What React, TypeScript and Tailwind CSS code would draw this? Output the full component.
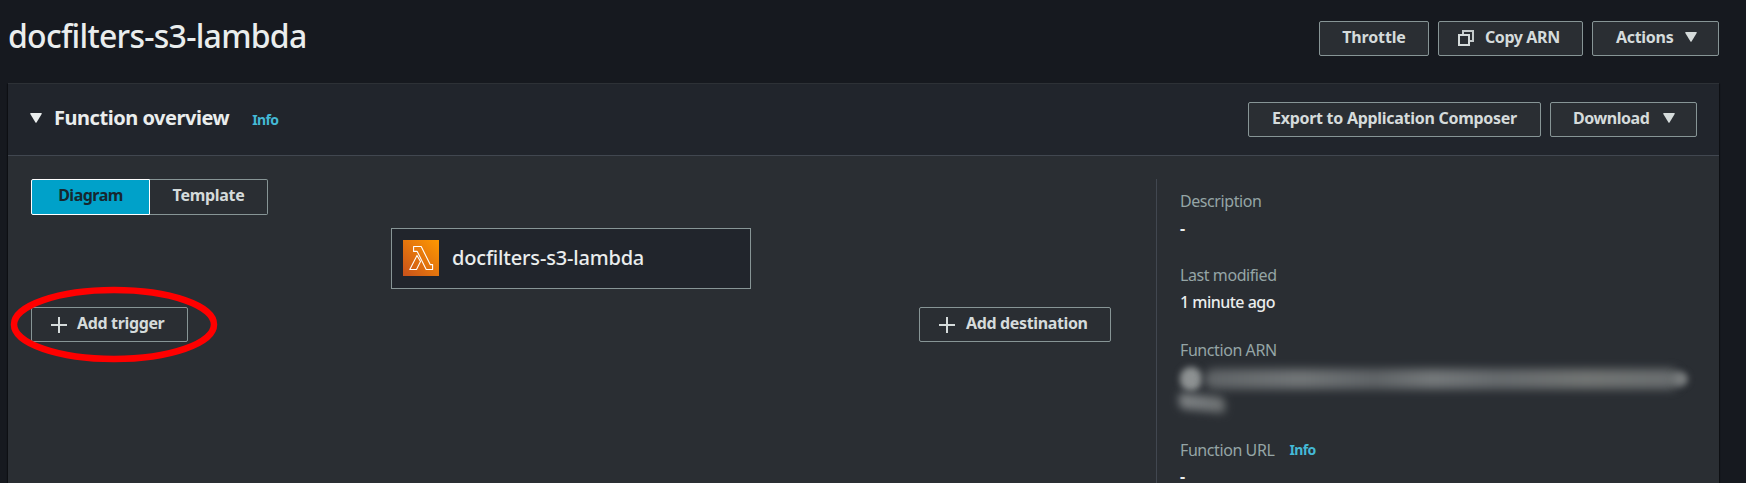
import React from "react";

const buttonBase =
  "flex h-[35px] shrink-0 items-center rounded-[2px] border border-[#879596] bg-[#2a2e33] pb-[3px] text-[16px] leading-none font-bold whitespace-nowrap text-[#d5dbdb]";

function Caret({ className }: { className: string }) {
  return (
    <svg className={className} width="12" height="10" viewBox="0 0 12 10" fill="currentColor">
      <path d="M0.8 0h10.4q1 0 .5 1L6.7 9.2q-.7 1-1.4 0L.3 1q-.5-1 .5-1z" />
    </svg>
  );
}

function PlusIcon() {
  return (
    <svg className="mt-[3px] shrink-0" width="16" height="16" viewBox="0 0 16 16" stroke="currentColor" strokeWidth="2">
      <path d="M8 0v16M0 8h16" />
    </svg>
  );
}

function CopyIcon() {
  return (
    <svg className="mt-px shrink-0" width="16" height="16" viewBox="0 0 16 16" fill="none" stroke="currentColor" strokeWidth="2">
      <path d="M5 5V1h10v10h-4" strokeOpacity="0.9" />
      <path d="M1 5h10v10H1z" />
    </svg>
  );
}

function LambdaIcon() {
  return (
    <svg className="-mt-px shrink-0" width="36" height="36" viewBox="0 0 36 36">
      <defs>
        <linearGradient id="lambda-fill" x1="0" y1="1" x2="1" y2="0">
          <stop offset="0" stopColor="#c8511b" />
          <stop offset="1" stopColor="#ff9900" />
        </linearGradient>
      </defs>
      <path fill="url(#lambda-fill)" d="M0 0h36v36H0z" />
      <path
        fill="none"
        stroke="#fff"
        strokeWidth="1.1"
        strokeLinejoin="round"
        d="M10.6 6.5h7.6L27.2 24.6h2.4v4.9h-6.4L14.2 11.4h-3.6zM14 15.4l3.5 6.2-4 7.9H6.8z"
      />
    </svg>
  );
}

function Label({ children }: { children: React.ReactNode }) {
  return <div className="flex h-6 items-center leading-6 text-[#95a5a6]">{children}</div>;
}

export default function App() {
  return (
    <div className="relative h-[483px] w-full overflow-hidden bg-[#16191f] pl-2 pr-[27px] font-['Noto_Sans',sans-serif] text-[16px] text-[#eaeded]">
      <header className="flex h-[83px] items-start justify-between">
        <h1 className="pt-[15px] text-[32px] leading-[42px] font-medium tracking-[-0.73px]">docfilters-s3-lambda</h1>
        <div className="flex gap-[9px] pt-[21px]">
          <button className={`${buttonBase} w-[110px] justify-center tracking-[-0.15px]`}>Throttle</button>
          <button className={`${buttonBase} w-[145px] pl-[19px] tracking-[-0.4px]`}>
            <CopyIcon />
            <span className="ml-[11px]">Copy ARN</span>
          </button>
          <button className={`${buttonBase} w-[127px] pl-[23px] tracking-[-0.3px]`}>
            Actions
            <Caret className="ml-[12px]" />
          </button>
        </div>
      </header>

      <main className="h-[400px] bg-[#2a2e33] shadow-[0_1px_1px_0_rgba(0,0,0,0.5),1px_1px_1px_0_rgba(0,0,0,0.3),-1px_1px_1px_0_rgba(0,0,0,0.3)]">
        <div className="flex h-[73px] items-center justify-between border-t border-b border-t-[#2d3136] border-b-[#414750] bg-[#21252c] pr-[22px] pl-[22px]">
          <div className="flex items-center pb-[3px]">
            <Caret className="mt-[-1px]" />
            <h2 className="ml-[12px] text-[20px] leading-[30px] font-bold tracking-[-0.47px]">Function overview</h2>
            <a className="ml-[23px] pt-[3px] text-[14px] font-bold tracking-[-0.65px] text-[#44b9d6]">Info</a>
          </div>
          <div className="flex gap-[9px] pb-px">
            <button className={`${buttonBase} w-[293px] justify-center tracking-[-0.28px]`}>
              Export to Application Composer
            </button>
            <button className={`${buttonBase} w-[147px] pl-[22px] tracking-[-0.45px]`}>
              Download
              <Caret className="ml-[14px]" />
            </button>
          </div>
        </div>

        <div className="flex pt-[23px] pl-[23px]">
          <section className="w-[1125px] shrink-0">
            <div className="flex h-9 w-[237px] text-[16px] leading-none font-bold">
              <button className="flex w-[119px] items-center justify-center rounded-l-[2px] border border-white bg-[#00a1c9] pb-[4px] tracking-[-0.5px] text-[#16272f]">
                Diagram
              </button>
              <button className="flex w-[118px] items-center justify-center rounded-r-[2px] border border-l-0 border-[#879596] pb-[4px] tracking-[-0.3px] text-[#d5dbdb]">
                Template
              </button>
            </div>
            <div className="mt-[13px] ml-[360px] flex h-[61px] w-[360px] items-center gap-[13px] border border-[#879596] bg-[#21252c] pb-px pl-[11px]">
              <LambdaIcon />
              <span className="-mt-px text-[20px] leading-6 font-medium tracking-[-0.18px]">docfilters-s3-lambda</span>
            </div>
            <div className="mt-[18px] flex w-[1080px] justify-between">
              <button className={`${buttonBase} w-[157px] pl-[19px] tracking-[-0.35px]`}>
                <PlusIcon />
                <span className="ml-[10px]">Add trigger</span>
              </button>
              <button className={`${buttonBase} w-[192px] pl-[19px] tracking-[-0.36px]`}>
                <PlusIcon />
                <span className="ml-[11px]">Add destination</span>
              </button>
            </div>
          </section>

          <aside className="h-[304px] w-[540px] border-l border-[#414750] pt-[10px] pl-[23px] tracking-[-0.42px]">
            <Label>Description</Label>
            <div className="mt-[3px] h-6 leading-6 font-bold">-</div>
            <div className="mt-[23px]">
              <Label>Last modified</Label>
            </div>
            <div className="mt-[3px] h-6 leading-6 font-medium tracking-[-0.52px]">1 minute ago</div>
            <div className="mt-6">
              <Label>Function ARN</Label>
            </div>
            <div className="mt-[4px] flex h-[25px] items-center">
              <div className="h-[24px] w-[22px] rounded-full bg-[#8d9192] blur-[3px]" />
              <div className="ml-[2px] h-[20px] w-[476px] rounded-full bg-[linear-gradient(90deg,#5f6366_0%,#717577_20%,#606467_36%,#74787a_48%,#666a6d_62%,#717473_80%,#696d6f_100%)] blur-[5px]" />
              <div className="-ml-[8px] h-[14px] w-[16px] rounded-full bg-[#777b7c] blur-[3px]" />
            </div>
            <div className="mt-[4px] -ml-[1px] h-[16px] w-[46px] skew-y-6 rounded-[5px] bg-gradient-to-r from-[#7c8083] to-[#6b6f70] blur-[4px]" />
            <div className="mt-[27px]">
              <Label>
                Function URL
                <a className="ml-[15px] text-[14px] font-bold tracking-[-0.65px] text-[#44b9d6]">Info</a>
              </Label>
            </div>
            <div className="mt-[7px] h-[14px] leading-[14px] font-bold">-</div>
          </aside>
        </div>
      </main>

      <svg className="absolute top-[286px] left-[10px]" width="208" height="77" viewBox="0 0 208 77" fill="none">
        <ellipse cx="104" cy="38.5" rx="100" ry="34.5" stroke="#ff0000" strokeWidth="6.5" />
      </svg>
    </div>
  );
}
